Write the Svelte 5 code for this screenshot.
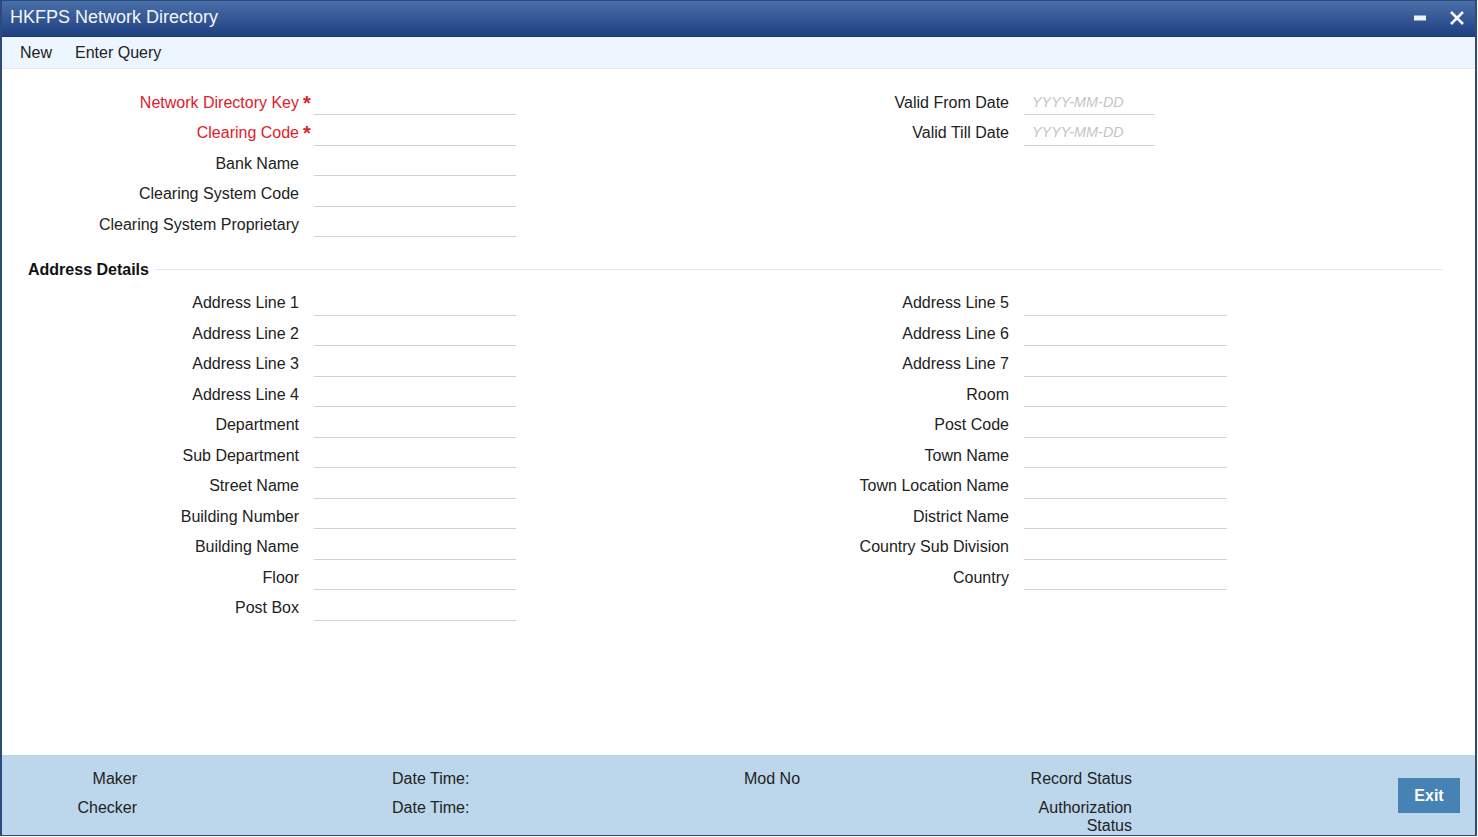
<script>
  const top = [
    { label: 'Network Directory Key', req: true },
    { label: 'Clearing Code', req: true },
    { label: 'Bank Name' },
    { label: 'Clearing System Code' },
    { label: 'Clearing System Proprietary' }
  ];
  const dates = ['Valid From Date', 'Valid Till Date'];
  const left = ['Address Line 1','Address Line 2','Address Line 3','Address Line 4','Department','Sub Department','Street Name','Building Number','Building Name','Floor','Post Box'];
  const right = ['Address Line 5','Address Line 6','Address Line 7','Room','Post Code','Town Name','Town Location Name','District Name','Country Sub Division','Country'];
</script>

<div class="window">
  <header class="titlebar">
    <h1>HKFPS Network Directory</h1>
    <div class="controls">
      <svg width="12" height="12" viewBox="0 0 12 12" aria-label="Minimize"><rect x="0" y="3.5" width="12" height="5" fill="#eef3fa"/></svg>
      <svg width="16" height="16" viewBox="0 0 16 16" aria-label="Close"><path d="M2 2 L14 14 M14 2 L2 14" stroke="#f4f7fc" stroke-width="2.6" fill="none"/></svg>
    </div>
  </header>

  <nav class="toolbar">
    <span>New</span>
    <span>Enter Query</span>
  </nav>

  <main class="content">
    <section class="columns">
      <div class="col">
        {#each top as f}
          <div class="row" class:required={f.req}>
            <label>{f.label}{#if f.req}<b class="star">*</b>{/if}</label>
            <div class="field"></div>
          </div>
        {/each}
      </div>
      <div class="col">
        {#each dates as d}
          <div class="row">
            <label>{d}</label>
            <div class="field date">YYYY-MM-DD</div>
          </div>
        {/each}
      </div>
    </section>

    <div class="legend"><span>Address Details</span><i></i></div>

    <section class="columns">
      <div class="col">
        {#each left as l}
          <div class="row"><label>{l}</label><div class="field"></div></div>
        {/each}
      </div>
      <div class="col">
        {#each right as l}
          <div class="row"><label>{l}</label><div class="field"></div></div>
        {/each}
      </div>
    </section>
  </main>

  <footer class="footer">
    <div class="audit">
      <span class="a1">Maker</span><span class="a2">Date Time:</span><span class="a3">Mod No</span><span class="a4">Record Status</span>
      <span class="a1">Checker</span><span class="a2">Date Time:</span><span class="a3"></span><span class="a4">Authorization Status</span>
    </div>
    <button class="exit">Exit</button>
  </footer>
</div>

<style>
  :global(body) { margin: 0; background: #fff; }
  .window {
    box-sizing: border-box;
    width: 1477px;
    height: 836px;
    display: flex;
    flex-direction: column;
    border: solid #2b4a7e;
    border-width: 1px 2px 1px 2px;
    font-family: "Liberation Sans", Arial, sans-serif;
    font-size: 16px;
    color: #222;
    overflow: hidden;
  }
  .titlebar {
    flex: 0 0 36px;
    display: flex;
    align-items: center;
    justify-content: space-between;
    padding: 0 10px 2px 8px;
    box-sizing: border-box;
    background: linear-gradient(#4a6fa8, #1f4081);
    border-bottom: 1px solid #1d3a70;
  }
  h1 { margin: 0; font-size: 18px; font-weight: 400; color: #f2f6fb; }
  .controls { display: flex; align-items: center; gap: 23px; }
  .toolbar {
    flex: 0 0 32px;
    box-sizing: border-box;
    display: flex;
    align-items: center;
    gap: 23px;
    padding: 0 0 0 18px;
    background: #edf5fe;
    border-bottom: 1px solid #e4e8ee;
    color: #222;
  }
  .content { flex: 1; padding-top: 15.5px; }
  .columns { display: grid; grid-template-columns: 710px 1fr; }
  .row { display: flex; height: 30.5px; }
  .row label {
    position: relative;
    box-sizing: border-box;
    width: 297px;
    flex: none;
    text-align: right;
    line-height: 36px;
    height: 30px;
    white-space: nowrap;
  }
  .required label { color: #e0202c; }
  .star { position: absolute; left: 301px; top: 0; color: #e0202c; font-weight: 700; font-size: 20px; }
  .field {
    box-sizing: border-box;
    width: 202px;
    height: 30.5px;
    margin-left: 15px;
    border-bottom: 1px solid #cfd3d8;
  }
  .col:last-child .field { width: 203px; }
  .col:last-child .date { width: 131px; }
  .date {
    padding-left: 8px;
    font-size: 14.4px;
    font-style: italic;
    line-height: 34px;
    color: #c4c4c4;
  }
  .legend {
    display: flex;
    align-items: center;
    gap: 6px;
    margin: 18px 32px 0 26px;
    height: 30px;
    font-weight: 700;
    color: #111;
  }
  .legend i { flex: 1; height: 1px; margin-bottom: 2px; background: #e6e8ea; }
  .footer {
    flex: 0 0 80px;
    box-sizing: border-box;
    display: flex;
    background: #bcd7ec;
    overflow: hidden;
  }
  .audit {
    display: grid;
    grid-template-columns: 135px 607px 278px 110px;
    grid-auto-rows: min-content;
    row-gap: 11px;
    padding-top: 15px;
    line-height: 18px;
  }
  .a1 { text-align: right; }
  .a2 { padding-left: 255px; }
  .a4 { text-align: right; }
  .a4:nth-child(4) { white-space: nowrap; direction: rtl; }
  .exit {
    width: 62px;
    height: 35px;
    margin: 23px 15px 0 auto;
    border: 0;
    background: #4682b4;
    color: #fff;
    font: 700 16px "Liberation Sans", Arial, sans-serif;
  }
</style>
